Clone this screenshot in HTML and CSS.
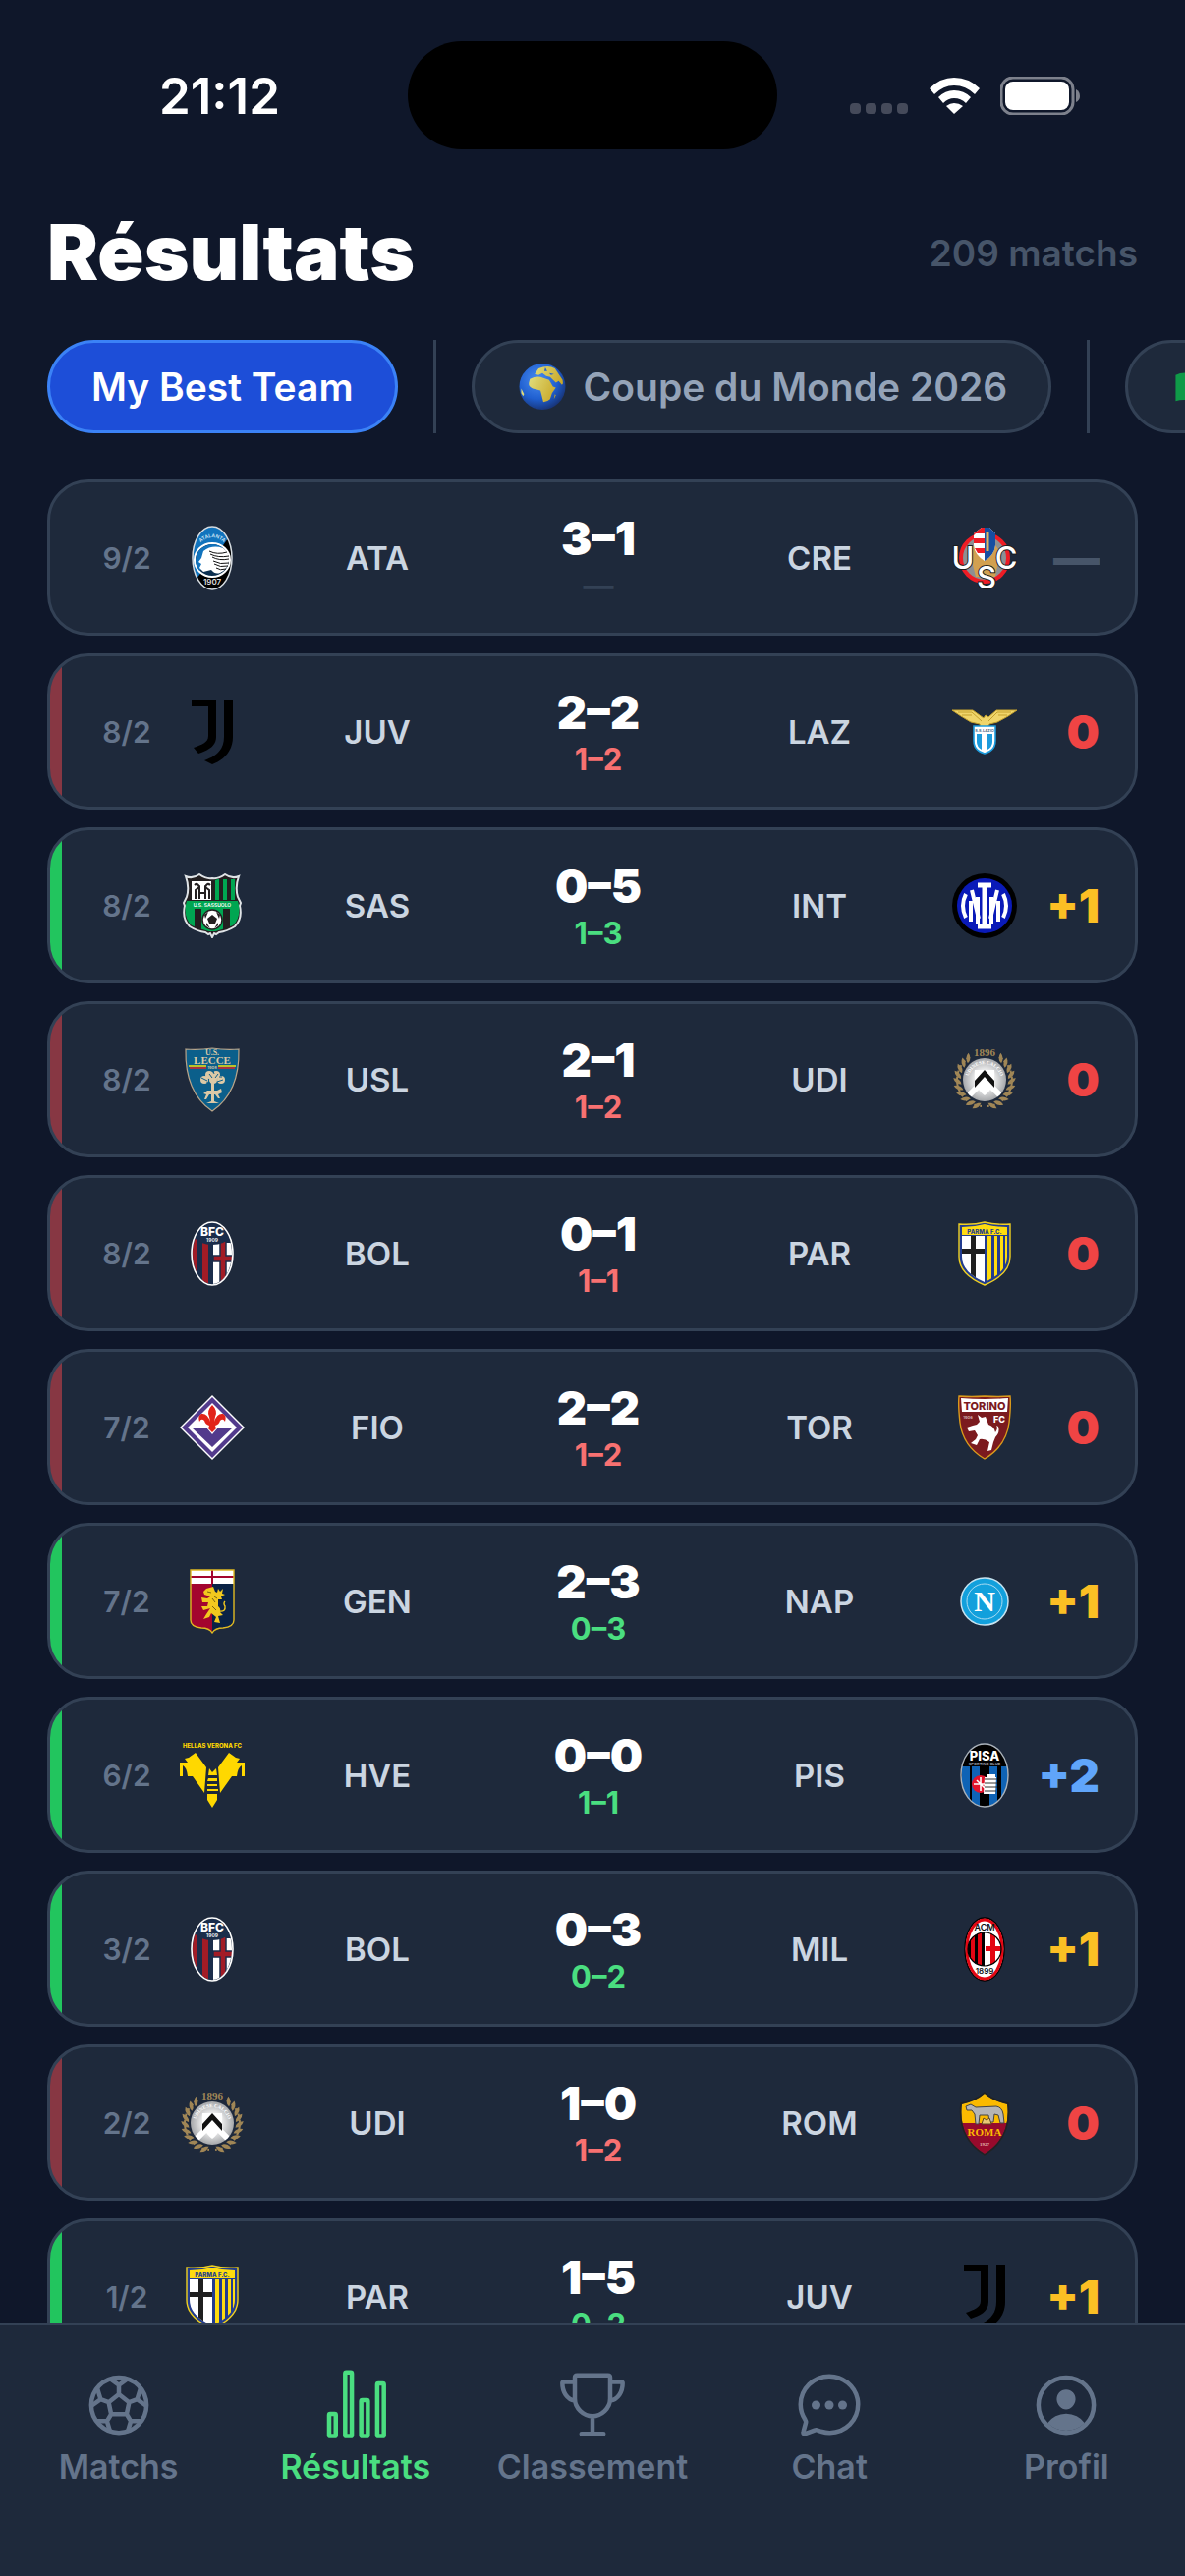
FILE: index.html
```html
<!DOCTYPE html>
<html lang="fr">
<head>
    <meta charset="UTF-8">
    <meta name="viewport" content="width=device-width, initial-scale=1.0">
    <title>Résultats</title>
    <link rel="stylesheet" href="styles.css">
</head>
<body>
    <!-- shared clips, gradients and text arcs -->
    <svg class="defs" aria-hidden="true">
        <defs>
            <clipPath id="clip-ata"><ellipse cx="33" cy="33" rx="20" ry="32"/></clipPath>
            <clipPath id="clip-bol"><ellipse cx="33" cy="33" rx="20" ry="31"/></clipPath>
            <clipPath id="clip-pis"><ellipse cx="33" cy="33" rx="24" ry="32"/></clipPath>
            <clipPath id="clip-mil"><circle cx="33" cy="33" r="17"/></clipPath>
            <clipPath id="clip-udi"><circle cx="33" cy="33" r="22"/></clipPath>
            <clipPath id="clip-sas"><path d="M8 5Q14 7 20 3Q27 7 33 7Q39 7 46 3Q52 7 58 5Q55 14 58 24L60 32Q62 46 54 53Q44 57 33 60Q22 57 12 53Q4 46 6 32L8 24Q11 14 8 5Z"/></clipPath>
            <clipPath id="clip-par"><path d="M10 6Q22 6 33 3Q44 6 56 6V36Q56 52 33 62Q10 52 10 36Z"/></clipPath>
            <clipPath id="clip-rom"><path d="M10 14Q24 11 33 3Q42 11 56 14Q60 48 33 64Q6 48 10 14Z"/></clipPath>
            <clipPath id="clip-gen"><path d="M11 1H55V52Q55 59 44 60Q36 60 33 64Q30 60 22 60Q11 59 11 52Z"/></clipPath>
            <radialGradient id="silver"><stop offset="0.4" stop-color="#f4f4f4"/><stop offset="1" stop-color="#a5a7aa"/></radialGradient>
            <radialGradient id="sea" cx="0.4" cy="0.35" r="0.7"><stop offset="0" stop-color="#4a8df0"/><stop offset="0.6" stop-color="#1f5fd0"/><stop offset="1" stop-color="#17306f"/></radialGradient>
            <linearGradient id="land" x1="0" y1="0" x2="1" y2="0.4"><stop offset="0" stop-color="#e9f09a"/><stop offset="1" stop-color="#c9a828"/></linearGradient>
            <path id="arc-ata" d="M17 22Q33 2 49 22"/>
            <path id="arc-mil" d="M19 21Q33 8 47 21"/>
            <path id="arc-udi" d="M16 34A17 17 0 0 1 50 34"/>
            <path id="leaf" d="M33 0Q37 5 33 11Q29 5 33 0Z"/>
            <g id="branch">
                <use href="#leaf" transform="rotate(38 33 33) rotate(-40 33 6)"/>
                <use href="#leaf" transform="rotate(52 33 33) rotate(-40 33 6)"/>
                <use href="#leaf" transform="rotate(66 33 33) rotate(-40 33 6)"/>
                <use href="#leaf" transform="rotate(80 33 33) rotate(-40 33 6)"/>
                <use href="#leaf" transform="rotate(94 33 33) rotate(-40 33 6)"/>
                <use href="#leaf" transform="rotate(108 33 33) rotate(-40 33 6)"/>
                <use href="#leaf" transform="rotate(122 33 33) rotate(-40 33 6)"/>
                <use href="#leaf" transform="rotate(136 33 33) rotate(-40 33 6)"/>
                <use href="#leaf" transform="rotate(150 33 33) rotate(-40 33 6)"/>
                <use href="#leaf" transform="rotate(164 33 33) rotate(-40 33 6)"/>
                <path fill="none" stroke="#a08656" stroke-width="2" stroke-dasharray="4 2" d="M48 10A27 27 0 0 1 36 60"/>
            </g>
        </defs>
    </svg>

    <!-- club crests, used by the rows below -->
    <svg class="sprite" aria-hidden="true">
        <symbol id="ata" viewBox="0 0 66 66">
            <g clip-path="url(#clip-ata)">
                <path fill="#1173bd" d="M0 0H66V66H0Z"/>
                <path fill="#000" d="M54 6L44 20L20 50L12 60V66H60V6Z"/>
            </g>
            <ellipse cx="33" cy="33" rx="20" ry="32" fill="none" stroke="#d5dbe0" stroke-width="1.5"/>
            <ellipse cx="33" cy="35" rx="18" ry="17" fill="#0b2f50" stroke="#fff" stroke-width="2"/>
            <path fill="#1173bd" d="M16 35A17 16 0 0 1 44 23L20 46Q16 41 16 35Z"/>
            <path fill="#fff" d="M24 26Q33 19 44 23Q51 28 50 36Q49 44 41 48Q36 50 32 45L24 47L20 43L22 39L19 37L22 33Z"/>
            <path fill="none" stroke="#111" stroke-width="1" d="M30 26Q38 30 48 27M31 29Q39 33 50 31M33 32Q40 36 50 34M34 36Q41 40 50 38M35 39Q41 43 49 41M37 43Q41 46 47 44"/>
            <text class="t6" fill="#cfe5f5"><textPath href="#arc-ata" startOffset="50%">ATALANTA</textPath></text>
            <text class="t8" x="33" y="60" fill="#ddd">1907</text>
        </symbol>

        <symbol id="juv" viewBox="0 0 66 66">
            <path d="M12 0H37V38C37 48 28 52 19 55L14 49C22 46 29 44 29 37V7H12Z"/>
            <path d="M45 0H54V38C54 53 44 62 33 66L25 62C36 58 45 52 45 38Z"/>
        </symbol>

        <symbol id="sas" viewBox="0 0 66 66">
            <path fill="#231f20" stroke="#dfe3e6" stroke-width="2" d="M6 3Q13 6 20 1Q27 6 33 5Q39 6 46 1Q53 6 60 3Q56 14 59 24L62 30L61 33Q64 46 56 54Q48 59 40 60L37 62L35 61L33 65L31 61L29 62L26 60Q18 59 10 54Q2 46 5 33L4 30L7 24Q10 14 6 3Z"/>
            <g clip-path="url(#clip-sas)">
                <path fill="#fff" d="M12 8H32V27H12Z"/>
                <path fill="#00a651" d="M36 6H40V27H36ZM44 6H48V27H44ZM52 6H56V27H52ZM0 28H66V36H0ZM5 36H15V55H5ZM22 36H44V59H22ZM51 36H62V55H51Z"/>
                <path fill="none" stroke="#231f20" stroke-width="2" d="M16 26V17L20 14V26M30 26V17L26 14V26M15 12Q18 9 20 14M31 12Q28 9 26 14M20 20H26"/>
            </g>
            <circle cx="33" cy="47" r="10" fill="#fff" stroke="#231f20" stroke-width="1.5"/>
            <path fill="#231f20" d="M33 42L38 46L36 51H30L28 46ZM25 42L29 39L26 46ZM41 42L37 39L40 46ZM27 53L31 56L27 50ZM39 53L35 56L39 50Z"/>
            <text class="t6" x="33" y="34" fill="#fff">U.S. SASSUOLO</text>
        </symbol>

        <symbol id="usl" viewBox="0 0 66 66">
            <path fill="#0b5f8b" stroke="#b9a58a" stroke-width="1.2" d="M6 2Q20 3 33 1Q46 3 60 2Q61 46 33 65Q5 46 6 2Z"/>
            <text class="t8 serif" x="33" y="8" fill="#dcc9a6">U.S.</text>
            <text class="t11 serif" x="33" y="17" fill="#dcc9a6">LECCE</text>
            <path stroke="#f4e409" stroke-width="1.5" d="M9 19H57"/>
            <path stroke="#d8232a" stroke-width="1.5" d="M10 21H56"/>
            <path fill="#0b5f8b" d="M27 18H39V23H27Z"/>
            <text class="t5" x="33" y="22" fill="#dcc9a6">1908</text>
            <g fill="#dcc9a6">
                <circle cx="25" cy="33" r="4"/><circle cx="30" cy="28" r="4"/><circle cx="37" cy="28" r="4"/><circle cx="42" cy="33" r="4"/><circle cx="34" cy="33" r="4"/>
                <path d="M32 34H35V55L40 57H27L32 55ZM24 47L28 44H38L42 42L43 46L39 48L41 52H39L36 48H30L27 53H25L27 48Z"/>
            </g>
            <path fill="none" stroke="#0b5f8b" stroke-width="1" d="M22 31L28 34M30 27L33 31M39 27L36 31M44 33L38 35M27 36H31M35 27L34 24M40 30H43"/>
        </symbol>

        <symbol id="bol" viewBox="0 0 66 66">
            <g clip-path="url(#clip-bol)">
                <path fill="#1b2d4b" d="M0 0H66V66H0Z"/>
                <path fill="#a21c26" d="M12 18H17V60H12ZM23 18H29V66H23Z"/>
                <path fill="#fff" d="M34 22H55V66H34Z"/>
                <path fill="#a21c26" stroke="#1b2d4b" stroke-width="1.5" d="M41 20H47V35H56V41H47V66H41V41H34V35H41Z"/>
                <path fill="#1b2d4b" d="M12 14Q20 24 33 24Q46 24 54 14V0H12Z"/>
            </g>
            <ellipse cx="33" cy="33" rx="21" ry="32" fill="none" stroke="#fff" stroke-width="1.6"/>
            <text class="t12 heavy" x="33" y="15" fill="#fff">BFC</text>
            <text class="t6" x="33" y="21" fill="#fff">1909</text>
        </symbol>

        <symbol id="fio" viewBox="0 0 66 66">
            <path fill="#fff" d="M33 0L66 33L33 66L0 33Z"/>
            <path fill="#523a8c" d="M33 2L64 33L33 64L2 33Z"/>
            <path fill="#fff" d="M33 8L58 33L33 58L8 33Z"/>
            <path fill="#523a8c" d="M12 33H27L33 40L39 33H54L33 53Z"/>
            <path fill="#e2231a" d="M33 10Q39 16 36 22L35 27Q38 18 44 19Q48 21 46 27Q44 23 41 26Q40 30 36 31L37 34L33 38L29 34L30 31Q26 30 25 26Q22 23 20 27Q18 21 22 19Q28 18 31 27L30 22Q27 16 33 10Z"/>
        </symbol>

        <symbol id="gen" viewBox="0 0 66 66">
            <g clip-path="url(#clip-gen)">
                <path fill="#a3052e" d="M10 0H33V66H10Z"/>
                <path fill="#0a2245" d="M33 0H56V66H33Z"/>
                <path fill="#fff" d="M10 0H56V15H10Z"/>
                <path fill="#a3052e" d="M32 0H34V15H32ZM10 7H56V9H10Z"/>
            </g>
            <path fill="none" stroke="#e0b922" stroke-width="1.4" d="M11 1H55V52Q55 59 44 60Q36 60 33 65Q30 60 22 60Q11 59 11 52Z"/>
            <path fill="#f2c91e" d="M27 20L34 18L36 23L38 24L39 20L41 23L44 20L43 25L46 26L42 28L43 31L39 31L39 38Q42 40 41 44L44 47L39 48L41 55L35 54L37 49L32 45L30 49L24 51L27 46L31 40L24 42L22 38L28 38L29 34L23 34L22 29L28 30L31 28L25 26L24 23Z"/>
            <path fill="none" stroke="#f2c91e" stroke-width="1.4" d="M40 43Q47 44 46 38Q44 35 46 33"/>
            <path fill="none" stroke="#7a6510" stroke-width="1" d="M28 23L32 24M33 30L36 34M35 28L38 30M33 38L37 42"/>
        </symbol>

        <symbol id="hve" viewBox="0 0 66 66">
            <text class="t7 heavy" x="33" y="5" fill="#ffd800">HELLAS VERONA FC</text>
            <g fill="#ffd800">
                <path d="M0 20L8 20L5 16L9 15L16 10L27 25L25 51L13 34H8Q7 25 3 23V34H0Z"/>
                <path d="M66 20L58 20L61 16L57 15L50 10L39 25L41 51L53 34H58Q59 25 63 23V34H66Z"/>
                <path d="M30 26L33 30L37 26L38 33H29ZM29 36H38V39H28ZM28 42H38V44H28ZM28 47H39V49H28ZM28 52H38V58L33 66L28 58Z"/>
            </g>
        </symbol>

        <symbol id="udi" viewBox="0 0 66 66">
            <g fill="#a08656">
                <use href="#branch"/>
                <use href="#branch" transform="matrix(-1 0 0 1 66 0)"/>
            </g>
            <circle cx="33" cy="33" r="24" fill="#1e293b"/>
            <circle cx="33" cy="33" r="22" fill="url(#silver)"/>
            <path clip-path="url(#clip-udi)" stroke="#fff" stroke-width="6" fill="none" d="M12 54L33 33L54 54"/>
            <path fill="#fff" d="M23 23H43Q45 40 33 49Q21 40 23 23Z"/>
            <path fill="#111" d="M23 34L33 23L43 34V41L33 30L23 41Z"/>
            <text class="t6 serif" fill="#fff"><textPath href="#arc-udi" startOffset="50%">UDINESE CALCIO</textPath></text>
            <text class="t11 serif" x="33" y="9" fill="#a08656">1896</text>
        </symbol>

        <symbol id="par" viewBox="0 0 66 66">
            <path fill="#223c8f" stroke="#f0d020" stroke-width="1.4" d="M7 3Q22 4 33 1Q44 4 59 3V36Q59 54 33 65Q7 54 7 36Z"/>
            <g clip-path="url(#clip-par)">
                <path fill="#ffdc0f" d="M8 0H58V14H8Z"/>
                <path fill="#fff" d="M8 15H33V66H8Z"/>
                <path fill="#1f1f1f" d="M19 15H24V66H19ZM8 28H33V33H8Z"/>
                <path fill="#ffdc0f" d="M36 15H40V66H36ZM43 15H46V66H43ZM49 15H52V66H49ZM54 15H56V66H54Z"/>
            </g>
            <text class="t7 heavy" x="33" y="13" fill="#223c8f">PARMA F.C.</text>
        </symbol>

        <symbol id="cre" viewBox="0 0 66 66">
            <circle cx="33" cy="33" r="24" fill="#8d8f92" stroke="#ee1c25" stroke-width="4"/>
            <path fill="#d2a050" d="M22 20Q33 14 44 20Q50 26 47 36L44 52H24L20 36Q16 26 22 20Z"/>
            <path fill="#fff" d="M22 8L30 2H38L44 8V20Q43 30 33 36Q23 30 22 20Z"/>
            <path fill="#ee1c25" d="M22 10V8L30 2H33V8H24ZM22 13H33V18H22ZM23 23H33V28H26Z"/>
            <path fill="#174ea1" d="M33 2H38L44 8V20Q43 30 33 36Z"/>
            <path stroke="#e2b45e" stroke-width="3" d="M36 6V26"/>
            <g class="usc" fill="#fff" stroke="#1b1b1b">
                <text x="11" y="44">U</text>
                <text x="35" y="64">S</text>
                <text x="55" y="44">C</text>
            </g>
        </symbol>

        <symbol id="laz" viewBox="0 0 66 66">
            <path fill="#f0d56a" stroke="#c3a02c" stroke-width="1" d="M0 11L21 11L32 19L34 16L37 18L45 11L66 11L57 17L46 23L38 25L36 28H29L28 25L19 23L9 17Z"/>
            <path fill="none" stroke="#c3a02c" stroke-width="1" d="M6 13H20L30 22M10 16H20M60 13H46L37 22M56 16H47"/>
            <path fill="#fff" stroke="#1d9bdc" stroke-width="1.6" d="M22 27H44V42Q44 52 33 55Q22 52 22 42Z"/>
            <path fill="#1d9bdc" d="M25 35H30V51Q25 48 25 43ZM36 35H41V43Q41 48 36 51Z"/>
            <text class="t5" x="33" y="33" fill="#3d6285">S.S.LAZIO</text>
        </symbol>

        <symbol id="int" viewBox="0 0 66 66">
            <circle cx="33" cy="33" r="33"/>
            <circle cx="33" cy="33" r="28" fill="#0a1ab8"/>
            <g fill="none" stroke="#fff">
                <path stroke-width="5" d="M33 12V54M26 12H40M26 54H40"/>
                <path stroke-width="4" d="M26 52V24M40 52V24"/>
                <path stroke-width="4" d="M27 46L20 17M39 46L46 17M19 49V28M47 49V28"/>
                <path stroke-width="4" d="M14 21Q8 33 14 45M52 21Q58 33 52 45"/>
            </g>
        </symbol>

        <symbol id="tor" viewBox="0 0 66 66">
            <path fill="#7b1a1e" stroke="#d99a1c" stroke-width="1.4" d="M7 1Q20 2 33 1Q46 2 59 1Q60 10 58 28Q55 52 33 65Q11 52 8 28Q6 10 7 1Z"/>
            <path fill="#fff" d="M9 3Q33 5 57 3L56 17H10Z"/>
            <text class="t11 heavy" x="33" y="15" fill="#7b1a1e">TORINO</text>
            <text class="t5" x="16" y="24" fill="#d7b9b9">1906</text>
            <text class="t9 heavy" x="48" y="28" fill="#fff">FC</text>
            <path fill="#fff" d="M26 20L30 23L34 22L37 30Q43 32 44 38Q47 34 45 31L47 32Q49 38 44 43L42 48L40 56L36 57L38 48Q33 44 28 45L25 51L19 49L24 45L26 41L23 36L17 37L15 33L21 31L25 30L28 27Z"/>
        </symbol>

        <symbol id="nap" viewBox="0 0 66 66">
            <circle cx="33" cy="33" r="24" fill="#12a0dc" stroke="#c6e3f0" stroke-width="1.5"/>
            <circle cx="33" cy="33" r="18" fill="none" stroke="#a9dcf3" stroke-width="1"/>
            <text class="nap-n" x="33" y="43" fill="#fff">N</text>
        </symbol>

        <symbol id="pis" viewBox="0 0 66 66">
            <g clip-path="url(#clip-pis)">
                <path d="M0 0H66V66H0Z"/>
                <path fill="#0f63b5" d="M10 24H18V66H10ZM20 24H28V66H20ZM38 24H46V66H38ZM50 24H57V60H50Z"/>
            </g>
            <ellipse cx="33" cy="33" rx="24" ry="32" fill="none" stroke="#aab2ba" stroke-width="1.4"/>
            <circle cx="29" cy="42" r="9" fill="#e2132b"/>
            <path stroke="#fff" stroke-width="1.6" d="M29 35V49M22 42H35M25 38L33 46"/>
            <path fill="#fff" d="M35 32H44V35H45L44 52H32L33 35H35Z"/>
            <path stroke="#333" d="M33 37H46M33 41H46M33 45H46M33 49H45"/>
            <text class="t13 heavy" x="33" y="18" fill="#fff">PISA</text>
            <text class="t5" x="33" y="23" fill="#aab2ba">SPORTING CLUB</text>
        </symbol>

        <symbol id="mil" viewBox="0 0 66 66">
            <ellipse cx="33" cy="33" rx="20" ry="32" fill="#fff" stroke="#000" stroke-width="1.4"/>
            <ellipse cx="33" cy="33" rx="18" ry="30" fill="#fff" stroke="#e30613" stroke-width="3"/>
            <g clip-path="url(#clip-mil)">
                <path d="M16 16H33V50H16Z"/>
                <path fill="#e30613" d="M19 16H23V50H19ZM26 16H30V50H26Z"/>
                <path fill="#fff" d="M34 16H51V50H34Z"/>
                <path fill="#e30613" d="M39 16H44V50H39ZM34 30H51V35H34Z"/>
            </g>
            <circle cx="33" cy="33" r="17" fill="none" stroke="#000" stroke-width="1.2"/>
            <text class="t9" x="33" y="14" fill="#111">ACM</text>
            <text class="t8" x="33" y="58" fill="#111">1899</text>
        </symbol>

        <symbol id="rom" viewBox="0 0 66 66">
            <g clip-path="url(#clip-rom)">
                <path fill="#fbba00" d="M0 0H66V33H0Z"/>
                <path fill="#970a2c" d="M0 33H66V66H0Z"/>
            </g>
            <path fill="none" stroke="#222" stroke-width="1.4" d="M9 13Q24 10 33 2Q42 10 57 13Q61 48 33 65Q5 48 9 13Z"/>
            <path fill="#b5b5b5" stroke="#444" stroke-width="1" d="M14 16L19 14L24 17L45 16Q51 17 52 24L53 33H49L47 25L43 24L42 32H38L37 25L28 25L27 34H24L23 24L20 20L15 20Z"/>
            <path fill="#e9c877" stroke="#5f4a20" stroke-width="1" d="M30 34L32 28L35 30L38 28L40 34Z"/>
            <text class="t11 serif" x="33" y="46" fill="#fbba00">ROMA</text>
            <text class="t6 serif" x="33" y="56" fill="#e3b7b0">1927</text>
        </symbol>
    </svg>

    <div class="status-bar">
        <span class="time">21:12</span>
        <div class="island"></div>
        <div class="indicators">
            <svg class="signal" viewBox="0 0 60 12"><rect width="11" height="11" y="1" rx="4"/><rect x="16" width="11" height="11" y="1" rx="4"/><rect x="32" width="11" height="11" y="1" rx="4"/><rect x="48" width="11" height="11" y="1" rx="4"/></svg>
            <svg class="wifi" viewBox="0 0 51 37"><path d="M25 0Q40 0 51 11L46 17Q37 8 25 8Q14 8 5 17L0 11Q11 0 25 0ZM25 13Q35 13 42 20L37 26Q32 21 25 21Q19 21 14 26L9 20Q16 13 25 13ZM25 26Q30 26 34 29L25 37L17 29Q21 26 25 26Z"/></svg>
            <svg class="battery" viewBox="0 0 82 39"><rect x="1" y="1" width="73" height="37" rx="12" fill="none" stroke="#7d818c" stroke-width="3"/><rect x="5" y="5" width="65" height="29" rx="8" fill="#fff"/><path fill="#7d818c" d="M77 13Q81 15 81 20Q81 24 77 26Z"/></svg>
        </div>
    </div>

    <header class="page-header">
        <h1>Résultats</h1>
        <span class="count">209 matchs</span>
    </header>

    <div class="filters">
        <button class="chip active">My Best Team</button>
        <span class="divider"></span>
        <button class="chip">
            <svg class="emoji" viewBox="0 0 48 48">
                <circle cx="24" cy="24" r="24" fill="url(#sea)"/>
                <path fill="url(#land)" d="M11 16Q17 13 22 14L31 17L35 24L38 25L34 31L32 37Q29 40 25 40L23 32L22 28L14 26Q9 24 10 20ZM16 11L20 5Q30 1 37 5L45 17Q46 22 44 22L41 18L38 20L32 14L28 13L24 10L20 12ZM2 26L5 32L4 34L2 31ZM37 32L38 33L36 37Z"/>
                <path fill="#1f5fd0" d="M27 4L29 8L26 8ZM31 10L36 11L33 12Z"/>
            </svg>
            Coupe du Monde 2026
        </button>
        <span class="divider"></span>
        <button class="chip" aria-label="Italie">
            <svg class="emoji" viewBox="0 0 48 48"><path fill="#0f9a48" d="M3 12Q9 9 17 10V38Q9 37 3 39Z"/><path fill="#fff" d="M17 10Q24 10 32 12V39L17 38Z"/><path fill="#d6283a" d="M32 12Q38 13 45 11V38Q38 40 32 39Z"/></svg>
        </button>
    </div>

    <main class="results">
        <article class="match">
            <span class="date">9/2</span>
            <svg class="crest"><use href="#ata"/></svg>
            <span class="team">ATA</span>
            <div class="score"><strong>3–1</strong><span class="guess none">—</span></div>
            <span class="team">CRE</span>
            <svg class="crest"><use href="#cre"/></svg>
            <span class="points none">—</span>
        </article>
        <article class="match lost">
            <span class="date">8/2</span>
            <svg class="crest"><use href="#juv"/></svg>
            <span class="team">JUV</span>
            <div class="score"><strong>2–2</strong><span class="guess">1–2</span></div>
            <span class="team">LAZ</span>
            <svg class="crest"><use href="#laz"/></svg>
            <span class="points">0</span>
        </article>
        <article class="match won">
            <span class="date">8/2</span>
            <svg class="crest"><use href="#sas"/></svg>
            <span class="team">SAS</span>
            <div class="score"><strong>0–5</strong><span class="guess">1–3</span></div>
            <span class="team">INT</span>
            <svg class="crest"><use href="#int"/></svg>
            <span class="points">+1</span>
        </article>
        <article class="match lost">
            <span class="date">8/2</span>
            <svg class="crest"><use href="#usl"/></svg>
            <span class="team">USL</span>
            <div class="score"><strong>2–1</strong><span class="guess">1–2</span></div>
            <span class="team">UDI</span>
            <svg class="crest"><use href="#udi"/></svg>
            <span class="points">0</span>
        </article>
        <article class="match lost">
            <span class="date">8/2</span>
            <svg class="crest"><use href="#bol"/></svg>
            <span class="team">BOL</span>
            <div class="score"><strong>0–1</strong><span class="guess">1–1</span></div>
            <span class="team">PAR</span>
            <svg class="crest"><use href="#par"/></svg>
            <span class="points">0</span>
        </article>
        <article class="match lost">
            <span class="date">7/2</span>
            <svg class="crest"><use href="#fio"/></svg>
            <span class="team">FIO</span>
            <div class="score"><strong>2–2</strong><span class="guess">1–2</span></div>
            <span class="team">TOR</span>
            <svg class="crest"><use href="#tor"/></svg>
            <span class="points">0</span>
        </article>
        <article class="match won">
            <span class="date">7/2</span>
            <svg class="crest"><use href="#gen"/></svg>
            <span class="team">GEN</span>
            <div class="score"><strong>2–3</strong><span class="guess">0–3</span></div>
            <span class="team">NAP</span>
            <svg class="crest"><use href="#nap"/></svg>
            <span class="points">+1</span>
        </article>
        <article class="match won">
            <span class="date">6/2</span>
            <svg class="crest"><use href="#hve"/></svg>
            <span class="team">HVE</span>
            <div class="score"><strong>0–0</strong><span class="guess">1–1</span></div>
            <span class="team">PIS</span>
            <svg class="crest"><use href="#pis"/></svg>
            <span class="points bonus">+2</span>
        </article>
        <article class="match won">
            <span class="date">3/2</span>
            <svg class="crest"><use href="#bol"/></svg>
            <span class="team">BOL</span>
            <div class="score"><strong>0–3</strong><span class="guess">0–2</span></div>
            <span class="team">MIL</span>
            <svg class="crest"><use href="#mil"/></svg>
            <span class="points">+1</span>
        </article>
        <article class="match lost">
            <span class="date">2/2</span>
            <svg class="crest"><use href="#udi"/></svg>
            <span class="team">UDI</span>
            <div class="score"><strong>1–0</strong><span class="guess">1–2</span></div>
            <span class="team">ROM</span>
            <svg class="crest"><use href="#rom"/></svg>
            <span class="points">0</span>
        </article>
        <article class="match won">
            <span class="date">1/2</span>
            <svg class="crest"><use href="#par"/></svg>
            <span class="team">PAR</span>
            <div class="score"><strong>1–5</strong><span class="guess">0–2</span></div>
            <span class="team">JUV</span>
            <svg class="crest"><use href="#juv"/></svg>
            <span class="points">+1</span>
        </article>
    </main>

    <nav class="tabs">
        <a href="#matchs">
            <svg viewBox="0 0 512 512"><circle cx="256" cy="256" r="200"/><path d="M256 178L330 236L312 322H200L182 236ZM256 178V112M256 112L200 70M256 112L312 70M330 236L388 214M388 214L412 136M388 214L446 256M312 322L342 372M342 372L322 440M342 372H412M200 322L170 372M170 372L190 440M170 372H100M182 236L124 214M124 214L100 136M124 214L66 256"/></svg>
            Matchs
        </a>
        <a href="#resultats" class="active">
            <svg viewBox="0 0 512 512"><rect x="64" y="320" width="48" height="160" rx="8"/><rect x="180" y="20" width="48" height="460" rx="8"/><rect x="296" y="220" width="48" height="260" rx="8"/><rect x="412" y="100" width="48" height="380" rx="8"/></svg>
            Résultats
        </a>
        <a href="#classement">
            <svg viewBox="0 0 512 512"><path d="M176 464h160M256 336v128M144 40H368Q384 40 384 56V210C384 280 320 336 256 336S128 280 128 210V56Q128 40 144 40ZM128 88H48Q38 88 38 98C38 160 70 216 128 224M384 88H464Q474 88 474 98C474 160 442 216 384 224"/></svg>
            Classement
        </a>
        <a href="#chat">
            <svg viewBox="0 0 512 512"><path d="M87 380c1-4-1-10-4-15a43 43 0 00-2-4 200 200 0 01-33-110C48 139 141 48 256 48 356 48 440 118 460 210a199 199 0 014 41c0 113-89 205-205 205-18 0-43-4-56-8s-27-9-30-10a31 31 0 00-12-2 31 31 0 00-12 2L82 463a16 16 0 01-5 1 10 10 0 01-10-10 16 16 0 011-3z"/><g class="solid"><circle cx="160" cy="256" r="32"/><circle cx="256" cy="256" r="32"/><circle cx="352" cy="256" r="32"/></g></svg>
            Chat
        </a>
        <a href="#profil">
            <svg viewBox="0 0 512 512"><circle cx="256" cy="256" r="200"/><path class="solid" d="M256 144c-20 0-38 7-50 21s-19 32-18 52C191 256 222 288 256 288s65-32 68-71c1-20-5-38-18-52C293 151 276 144 256 144zM122 386A160 150 0 0 1 390 386A192 192 0 0 1 122 386z"/></svg>
            Profil
        </a>
    </nav>
</body>
</html>
```
FILE: styles.css
```css
* {
    box-sizing: border-box;
}
body {
    margin: 0;
    height: 100vh;
    display: flex;
    flex-direction: column;
    overflow: hidden;
    font-family: Inter, "Liberation Sans", sans-serif;
    background-color: #0f172a;
    color: #ffffff;
}
.defs {
    position: absolute;
    width: 0;
    height: 0;
}
.sprite {
    display: none;
}

/* status bar */
.status-bar {
    display: grid;
    grid-template-columns: 1fr 376px 1fr;
    align-items: center;
    padding: 42px 0 0;
}
.time {
    padding-left: 32px;
    text-align: center;
    font-size: 51px;
    font-weight: 600;
}
.island {
    height: 110px;
    border-radius: 55px;
    background-color: #000000;
}
.indicators {
    display: flex;
    align-items: center;
    justify-content: center;
    gap: 21px;
    padding-right: 32px;
}
.signal {
    width: 60px;
    height: 12px;
    margin-top: 26px;
    fill: #454a5a;
}
.wifi {
    width: 51px;
    height: 37px;
    fill: #ffffff;
}
.battery {
    width: 82px;
    height: 39px;
}

/* header */
.page-header {
    display: flex;
    justify-content: space-between;
    align-items: center;
    padding: 59px 48px 43px;
}
h1 {
    margin: 0;
    font-size: 78px;
    font-weight: 900;
    line-height: 92px;
}
.count {
    font-size: 37px;
    font-weight: 600;
    color: #475569;
}

/* competition filters */
.filters {
    display: flex;
    flex-shrink: 0;
    gap: 36px;
    padding: 0 48px 47px;
    overflow: hidden;
}
.chip {
    display: flex;
    flex-shrink: 0;
    align-items: center;
    gap: 15px;
    padding: 21px 42px;
    border: 3px solid #334155;
    border-radius: 48px;
    background-color: #1e293b;
    color: #94a3b8;
    font-family: inherit;
    font-size: 39px;
    font-weight: 600;
    line-height: 47px;
    cursor: pointer;
}
.chip.active {
    background-color: #1d4ed8;
    border-color: #3b82f6;
    color: #ffffff;
}
.emoji {
    width: 54px;
    height: 47px;
}
.divider {
    flex-shrink: 0;
    width: 3px;
    background-color: #334155;
}

/* match rows */
.results {
    flex: 1;
    min-height: 0;
    overflow: hidden;
    padding: 0 48px;
}
.match {
    display: grid;
    grid-template-columns: 96px 66px 1fr 180px 1fr 66px 84px;
    align-items: center;
    height: 159px;
    margin-bottom: 18px;
    padding: 0 36px;
    border: 3px solid #334155;
    border-radius: 42px;
    background-color: #1e293b;
    text-align: center;
}
.match.lost {
    background-image: linear-gradient(to right, #873743 12px, transparent 12px);
}
.match.won {
    background-image: linear-gradient(to right, #22c55e 12px, transparent 12px);
}
.date {
    padding-right: 12px;
    font-size: 30px;
    font-weight: 600;
    color: #64748b;
}
.crest {
    width: 66px;
    height: 66px;
}
.team {
    font-size: 33px;
    font-weight: 600;
    color: #cbd5e1;
}
.score strong {
    display: block;
    font-size: 47px;
    font-weight: 900;
    line-height: 54px;
}
.guess {
    display: block;
    margin-top: 3px;
    font-size: 31px;
    font-weight: 700;
    line-height: 36px;
}
.lost .guess {
    color: #f87171;
}
.won .guess {
    color: #4ade80;
}
.guess.none {
    color: #334155;
}
.points {
    text-align: right;
    font-size: 47px;
    font-weight: 900;
    color: #fbbf24;
}
.lost .points {
    color: #ef4444;
}
.points.bonus {
    color: #60a5fa;
}
.points.none {
    color: #475569;
}

/* lettering inside the crests */
.sprite text {
    font-weight: 600;
    text-anchor: middle;
}
.sprite .heavy { font-weight: 800; }
.sprite .serif { font-family: "Liberation Serif", serif; }
.t5 { font-size: 4px; }
.t6 { font-size: 5px; }
.t7 { font-size: 6px; }
.t8 { font-size: 8px; }
.t9 { font-size: 9px; }
.t11 { font-size: 11px; }
.t12 { font-size: 12px; }
.t13 { font-size: 13px; }
.usc text {
    font-size: 31px;
    font-weight: 500;
    stroke-width: 2px;
    paint-order: stroke;
}
.sprite .nap-n {
    font-family: "Liberation Serif", serif;
    font-size: 30px;
    font-weight: 700;
}

/* bottom tabs */
.tabs {
    display: flex;
    height: 258px;
    padding-top: 45px;
    border-top: 3px solid #334155;
    background-color: #1e293b;
}
.tabs a {
    flex: 1 1 0;
    display: flex;
    flex-direction: column;
    align-items: center;
    gap: 7px;
    color: #64748b;
    font-size: 34px;
    font-weight: 600;
    line-height: 39px;
    text-decoration: none;
}
.tabs a.active {
    color: #4ade80;
}
.tabs svg {
    width: 72px;
    height: 72px;
    fill: none;
    stroke: currentColor;
    stroke-width: 32;
    stroke-linecap: round;
    stroke-linejoin: round;
}
.tabs .solid {
    fill: currentColor;
    stroke: none;
}
```
